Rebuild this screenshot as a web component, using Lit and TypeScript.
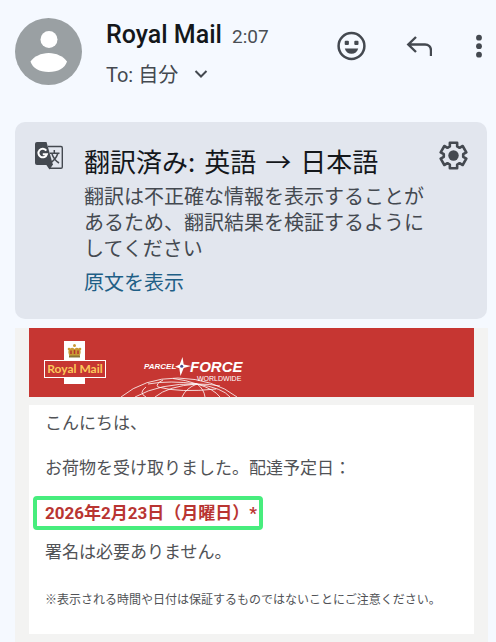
import { LitElement, html, css, svg } from "lit";
import { customElement } from "lit/decorators.js";

@customElement("message-header")
class MessageHeader extends LitElement {
  static styles = css`
    :host { display: block; }
    * { box-sizing: border-box; }
    .bar { display: flex; align-items: flex-start; padding: 18px 10px 0 15px; }
    .avatar { flex: none; width: 67px; height: 67px; display: block; }
    .who { flex: 1; min-width: 0; padding-left: 24px; }
    .line { display: flex; align-items: baseline; gap: 10px; line-height: 34px; }
    .name { margin: 0; font-size: 25px; font-weight: 500; color: #14171b; white-space: nowrap; }
    .time { font-size: 19px; color: #4a4e54; }
    button { border: 0; padding: 0; background: none; font: inherit; color: #444950; cursor: pointer; display: flex; align-items: center; }
    .to { font-size: 20px; line-height: 26px; gap: 16px; margin-top: 8px; }
    .actions { display: flex; align-items: center; padding-top: 12px; gap: 34px; }
    svg { display: block; }
  `;
  render() {
    return html`
      <header class="bar">
        <svg class="avatar" viewBox="0 0 67 67" role="img" aria-label="Royal Mail">
          <circle cx="33.5" cy="33.5" r="33.5" fill="#9aa0a3" />
          <circle cx="34" cy="21.5" r="8.5" fill="#fff" />
          <path d="M15.500 43.500C19 38.500 26 35 33.700 35S48.500 38.500 52 43.500C50 50 43 54 33.700 54S17.500 50 15.500 43.500Z" fill="#fff" />
        </svg>
        <div class="who">
          <div class="line"><h1 class="name">Royal Mail</h1><time class="time">2:07</time></div>
          <button class="to">To: 自分
            <svg width="14" height="10" viewBox="0 0 14 10" fill="none" stroke="#444950" stroke-width="2"><path d="M1.500 1L7 6.500L12.500 1" /></svg>
          </button>
        </div>
        <div class="actions">
          <button aria-label="リアクションを追加">
            <svg width="30" height="32" viewBox="0 0 30 32">
              <circle cx="15.500" cy="16" r="12.900" fill="none" stroke="#444950" stroke-width="2.500" />
              <rect x="8.700" y="10.700" width="4.200" height="4.200" rx="1" fill="#444950" />
              <rect x="18.300" y="10.700" width="4.200" height="4.200" rx="1" fill="#444950" />
              <path d="M8.800 18.500H22.200C21.300 21.800 18.800 23.800 15.500 23.800S9.700 21.800 8.800 18.500Z" fill="#444950" />
            </svg>
          </button>
          <button aria-label="返信">
            <svg width="32" height="32" viewBox="0 0 32 32" fill="none" stroke="#444950" stroke-width="2.400">
              <path d="M16 7L8.300 14.500L16 22M8.500 14.500H25C28.500 14.500 31 17 31 20.500V26" />
            </svg>
          </button>
          <button aria-label="その他">
            <svg width="20" height="32" viewBox="0 0 20 32" fill="#444950">
              <circle cx="13" cy="7.700" r="2.900" /><circle cx="13" cy="16.200" r="2.900" /><circle cx="13" cy="24.700" r="2.900" />
            </svg>
          </button>
        </div>
      </header>
    `;
  }
}

@customElement("translate-card")
class TranslateCard extends LitElement {
  static styles = css`
    :host { display: block; }
    .card { display: flex; align-items: flex-start; background: #e2e6ee; border-radius: 10px; padding: 18px 19px 23px 20px; }
    .glyph { flex: none; margin-top: 1px; }
    .text { flex: 1; min-width: 0; padding: 4px 12px 0 20px; }
    h2 { display: flex; gap: 9px; margin: 0; font-family: "Noto Sans CJK JP", sans-serif; font-size: 26px; line-height: 34px; font-weight: 400; color: #14171b; white-space: nowrap; }
    p { margin: 6px 0 8px; font-size: 20px; line-height: 26px; color: #444950; }
    a { display: block; font-size: 20px; line-height: 26px; color: #1f5f86; text-decoration: none; }
    button { flex: none; border: 0; padding: 0; background: none; cursor: pointer; }
    svg { display: block; }
  `;
  render() {
    const teeth = [0, 60, 120, 180, 240, 300];
    const pt = (r: number, deg: number) => {
      const a = ((deg - 90) * Math.PI) / 180;
      return `${(15.5 + r * Math.cos(a)).toFixed(2)} ${(15.5 + r * Math.sin(a)).toFixed(2)}`;
    };
    const gear = "M" + teeth.map((t) => [pt(9.8, t - 22), pt(13.2, t - 16), pt(13.2, t + 16), pt(9.8, t + 22)].join("L")).join("L") + "Z";
    return html`
      <section class="card">
        <svg class="glyph" width="29" height="30" viewBox="0 0 29 30">
          <path d="M13 5.500H26Q27.300 5.500 27.300 7V26Q27.300 27.300 26 27.300H15L13.500 24" fill="none" stroke="#444950" stroke-width="1.400" />
          <path d="M2 1H11.500L18 24H2Q0 24 0 22V3Q0 1 2 1Z" fill="#444950" />
          <path d="M11 23.500H18L14.500 28.500Z" fill="#444950" />
          <path d="M11.300 9.600A4.300 4.300 0 1 0 11.900 13.200H7.800" fill="none" stroke="#fff" stroke-width="2" />
          <path d="M19.300 9V12M14.800 12.200H24.500M22.800 12.500C21.500 16.500 19 19.500 15.500 22M17 13C18.300 16.800 20.500 19.800 24 22" fill="none" stroke="#444950" stroke-width="1.500" />
        </svg>
        <div class="text">
          <h2><span>翻訳済み:</span> <span>英語</span> <span lang="ja">→</span> <span>日本語</span></h2>
          <p>翻訳は不正確な情報を表示することがあるため、翻訳結果を検証するようにしてください</p>
          <a href="#original">原文を表示</a>
        </div>
        <button aria-label="設定">
          <svg width="30" height="30" viewBox="0 0 30 30">
            ${svg`<path d=${gear} fill="none" stroke="#444950" stroke-width="2.6" stroke-linejoin="round" />`}
            <circle cx="15.500" cy="15.500" r="5.200" fill="#444950" />
          </svg>
        </button>
      </section>
    `;
  }
}

@customElement("mail-body")
class MailBody extends LitElement {
  static styles = css`
    :host { display: block; flex: 1; background: #f3f3f2; padding: 0 14px 8px; }
    .banner { display: flex; align-items: flex-end; gap: 10px; background: #c63632; padding: 13px 15px 0; }
    .banner svg { display: block; flex: none; }
    .crest { margin-bottom: 12px; }
    .rm { font-family: Lato, "Liberation Sans", sans-serif; font-size: 12px; font-weight: 700; fill: #fbc95a; }
    .pf { font-family: "Liberation Sans", sans-serif; font-style: italic; fill: #fff; }
    .parcel { font-size: 8px; font-weight: 700; }
    .force { font-size: 15px; font-weight: 700; }
    .world { font-family: "Liberation Sans", sans-serif; font-size: 7px; fill: #fff; }
    .sheet { background: #fff; margin-top: 8px; padding: 6px 16px 24px; color: #505256; font-size: 17px; line-height: 24px; }
    p { margin: 0 0 21px; }
    .date { display: inline-block; margin: -5px 0 10px -12px; padding: 1px 2px 1px 8px; border: 4px solid #47ed7d; border-radius: 4px; color: #b93532; font-weight: 700; white-space: nowrap; }
    .sign { margin-bottom: 26px; }
    .note { margin: 0; font-size: 12px; line-height: 20px; }
  `;
  render() {
    return html`
      <div class="banner">
        <svg class="crest" width="62" height="44" viewBox="0 0 62 44" role="img" aria-label="Royal Mail">
          <rect x="20" y="0" width="21" height="43" fill="#fff" />
          <g fill="#c99a35">
            <path d="M25 8.500Q28 5.500 30.500 8Q33 5.500 36 8.500Q37.500 11 35.500 15H25.500Q23.500 11 25 8.500Z" />
            <circle cx="30.500" cy="4.500" r="1.500" />
            <circle cx="25" cy="8" r="1.300" /><circle cx="36" cy="8" r="1.300" />
          </g>
          <path d="M27 9.500V13M30.500 9V13M34 9.500V13" stroke="#b5332e" stroke-width="1.500" />
          <rect x="25" y="14.500" width="11" height="2" fill="#8a7434" />
          <rect x=".500" y="19.500" width="61" height="17" fill="#c63632" stroke="#fff" />
          <text class="rm" x="31" y="32" text-anchor="middle">Royal Mail</text>
        </svg>
        <svg width="130" height="44" viewBox="0 0 130 44" role="img" aria-label="Parcelforce Worldwide">
          <g fill="none" stroke="#fff" stroke-width=".8">
            <path d="M5 44Q28 25 62 25Q98 26 121 44" />
            <path d="M19 44Q44 30 81 31Q52 33 39 44M81 31Q70 35 66 44M81 31Q88 36 89 44M81 31Q98 36 104 44M81 31Q107 35 114 44" />
            <path d="M81 31Q70 27 57 25.500M81 31Q54 27 32 31M81 31Q95 31 104 33" />
            <path d="M47 27Q39 31 42 34Q64 40 100 36M30 34Q22 40 30 44" />
          </g>
          <text class="pf parcel" x="28" y="16">PARCEL</text>
          <path d="M66.500 4L67.700 11.500L75 13L67.700 15L64.500 23L63.300 15.300L59 13.800L63.700 11.500Z" fill="#fff" />
          <circle cx="65.700" cy="13.200" r="1.500" fill="#4b4b8c" />
          <text class="pf force" x="74" y="19">FORCE</text>
          <text class="world" x="81" y="28">WORLDWIDE</text>
        </svg>
      </div>
      <article class="sheet">
        <p>こんにちは、</p>
        <p>お荷物を受け取りました。配達予定日：</p>
        <div><strong class="date">2026年2月23日（月曜日）*</strong></div>
        <p class="sign">署名は必要ありません。</p>
        <p class="note">※表示される時間や日付は保証するものではないことにご注意ください。</p>
      </article>
    `;
  }
}

@customElement("app-root")
class AppRoot extends LitElement {
  static styles = css`
    :host { display: flex; flex-direction: column; min-height: 100vh; background: #f5f9ff; font-family: Roboto, "Noto Sans CJK JP", sans-serif; }
    message-header { flex: none; }
    translate-card { margin: 34px 9px 9px 15px; }
    mail-body { margin: 0 8px 0 15px; }
  `;
  render() {
    return html`
      <message-header></message-header>
      <translate-card></translate-card>
      <mail-body></mail-body>
    `;
  }
}
